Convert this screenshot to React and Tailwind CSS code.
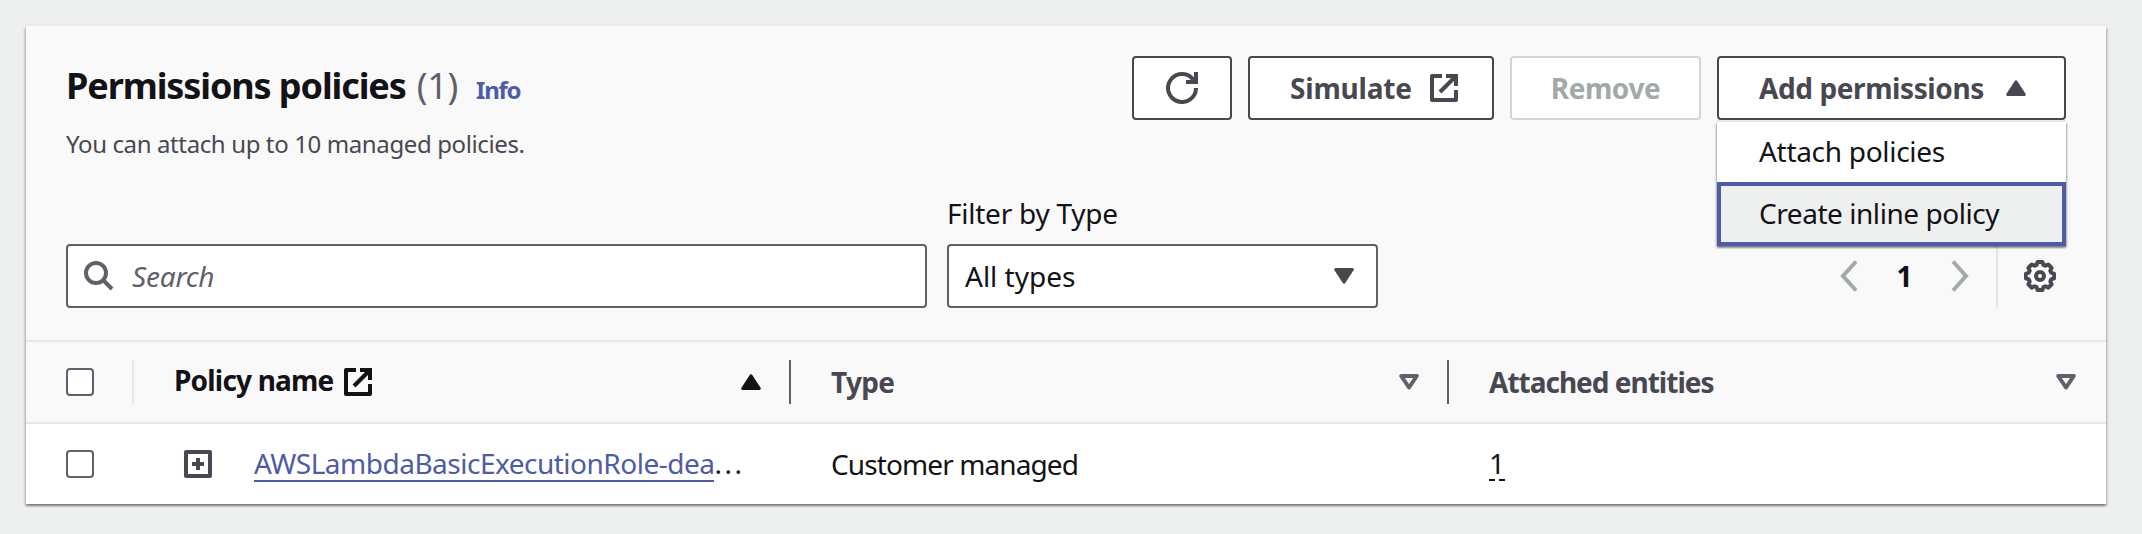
import React from "react";

const External = ({ className }) => (
  <svg viewBox="0 0 28 28" className={className} fill="none" stroke="currentColor" strokeWidth="4">
    <path d="M12 2H2v24h24V16" strokeLinejoin="round" />
    <path d="M16 2h10v10" />
    <path d="M10 18L25 3" />
  </svg>
);

const Refresh = () => (
  <svg viewBox="0 0 32 32" className="size-8" fill="none" stroke="currentColor" strokeWidth="4">
    <path d="M30 16A14 14 0 1 1 27.5 8" />
    <path d="M20 10h10V0" />
  </svg>
);

const SearchIcon = () => (
  <svg viewBox="0 0 30 30" className="size-[30px] shrink-0 text-[#5f6069]" fill="none" stroke="currentColor" strokeWidth="4">
    <circle cx="12" cy="12" r="10" />
    <path d="M19 19l9 9" />
  </svg>
);

const TriUp = ({ className }) => (
  <svg viewBox="0 0 20 16" className={className} fill="currentColor" stroke="currentColor" strokeWidth="3" strokeLinejoin="round">
    <path d="M10 1.8L18.3 14.5H1.7z" />
  </svg>
);

const TriDown = () => (
  <svg viewBox="0 0 20 16" className="h-4 w-5 text-[#484851]" fill="currentColor" stroke="currentColor" strokeWidth="3" strokeLinejoin="round">
    <path d="M10 14.2L18.3 1.5H1.7z" />
  </svg>
);

const TriOutline = () => (
  <svg viewBox="0 0 20 16" className="h-4 w-5 shrink-0 text-[#5f6069]" fill="none" stroke="currentColor" strokeWidth="4" strokeLinejoin="round">
    <path d="M10 13.5L17.8 2H2.2z" />
  </svg>
);

const Chevron = ({ d }) => (
  <svg viewBox="0 0 18 32" className="h-8 w-[18px] text-[#a2a9a9]" fill="none" stroke="currentColor" strokeWidth="4">
    <path d={d} />
  </svg>
);

const Gear = () => (
  <svg viewBox="0 0 32 32" className="size-8 text-[#484851]" fill="none" stroke="currentColor" strokeWidth="4" strokeLinejoin="round">
    <path d="M13.6 2h4.8l1 2.9 2.1.9L24.3 4.5l3.3 3.3-1.3 2.8.9 2 2.8 1v4.8l-2.8 1-.9 2.1 1.3 2.8-3.3 3.3-2.8-1.3-2.1.9-1 2.8h-4.8l-1-2.8-2.1-.9-2.800 1.300-3.300-3.300 1.300-2.800-.9-2.100L2 18.400v-4.800l2.800-1 .9-2-1.300-2.800 3.300-3.300 2.800 1.300 2.100-.9z" />
    <circle cx="16" cy="16" r="4" />
  </svg>
);

const Checkbox = () => <span className="block size-7 rounded border-2 border-[#5f6069] bg-white" />;

export default function App() {
  return (
    <div className="h-[534px] w-[2142px] bg-[#eef0f0] pt-[26px] pl-[26px] font-['Noto_Sans',sans-serif] text-[28px] leading-8 font-[450] whitespace-nowrap text-[#121217]">
      <section className="flex h-[478px] w-[2080px] flex-col bg-[#f9f9f9] shadow-[0_2px_2px_rgba(0,7,22,0.35),2px_2px_2px_rgba(0,7,22,0.12),-2px_2px_2px_rgba(0,7,22,0.12),0_-2px_0_#e9ebeb]">
        <header className="flex h-[154px] justify-between pt-[30px] pr-10 pl-10">
          <div>
            <div className="flex h-[58px] items-baseline pt-px">
              <h2 className="text-[36px] leading-[58px] font-bold tracking-[-1.1px]">Permissions policies</h2>
              <span className="ml-[11px] text-[36px] tracking-[-0.3px] text-[#5f6069]">(1)</span>
              <a className="ml-[18px] text-2xl font-bold tracking-[-1.2px] text-[#4f5ba6]">Info</a>
            </div>
            <p className="mt-[14px] text-2xl tracking-[-0.38px] text-[#484851]">You can attach up to 10 managed policies.</p>
          </div>
          <div className="flex h-16 gap-4 font-bold text-[#484851]">
            <button className="flex w-[100px] items-center justify-center rounded border-2 border-[#484851] bg-white">
              <Refresh />
            </button>
            <button className="flex w-[246px] items-center justify-between rounded border-2 border-[#484851] bg-white pr-[34px] pl-10">
              <span className="tracking-[-0.2px]">Simulate</span>
              <External className="size-7" />
            </button>
            <button className="w-[191px] rounded border-2 border-[#d1d5d5] bg-white tracking-[-0.4px] text-[#a2a9a9]">Remove</button>
            <div className="relative w-[349px]">
              <button className="flex h-16 w-full items-center justify-between rounded border-2 border-[#484851] bg-white pr-[38px] pl-10">
                <span className="tracking-[-0.4px]">Add permissions</span>
                <TriUp className="h-4 w-5" />
              </button>
              <div className="absolute top-[66px] left-0 z-10 w-full bg-white font-[450] text-[#121217] shadow-[0_2px_2px_rgba(0,7,22,0.35),1px_1px_2px_rgba(0,7,22,0.2),-1px_1px_2px_rgba(0,7,22,0.2),0_-2px_0_#ebe9f0]">
                <div className="flex h-[60px] items-center pb-0.5 pl-[42px] tracking-[-0.3px]">Attach policies</div>
                <div className="flex h-16 items-center border-4 border-[#4f5ba6] bg-[#eef0f0] pb-0.5 pl-[38px] tracking-[-0.45px]">Create inline policy</div>
              </div>
            </div>
          </div>
        </header>

        <div className="flex h-[160px] items-end pr-[50px] pb-[32px] pl-10">
          <div className="flex h-16 w-[861px] items-center rounded border-2 border-[#5f6069] bg-white pl-4">
            <SearchIcon />
            <span className="ml-[18px] tracking-[-0.2px] text-[#5f6069] italic">Search</span>
          </div>
          <div className="ml-5 w-[431px]">
            <div className="mb-[15px] tracking-[-0.25px]">Filter by Type</div>
            <div className="flex h-16 items-center justify-between rounded border-2 border-[#5f6069] bg-white pr-[22px] pl-4">
              <span>All types</span>
              <TriDown />
            </div>
          </div>
          <div className="ml-auto flex h-16 items-center">
            <Chevron d="M16 1.5L3 16l13 14.5" />
            <span className="w-[93px] text-center font-bold">1</span>
            <Chevron d="M2 1.5L15 16 2 30.5" />
            <span className="mr-[26px] ml-[27px] h-full w-0.5 bg-[#e5e7e7]" />
            <Gear />
          </div>
        </div>

        <div className="flex h-[84px] items-center border-y-2 border-[#e7e9e9] pl-10 font-bold text-[#484851]">
          <div className="flex h-11 w-[68px] items-center border-r-2 border-[#e7e9e9]"><Checkbox /></div>
          <div className="flex h-11 w-[657px] items-center border-r-2 border-[#5f6069] pr-7 pl-10 text-[#121217]">
            <span className="-mt-1 tracking-[-0.8px]">Policy name</span>
            <External className="ml-[10px] size-7" />
            <TriUp className="ml-auto h-4 w-5" />
          </div>
          <div className="flex h-11 w-[658px] items-center justify-between border-r-2 border-[#5f6069] pr-7 pl-10">
            <span className="tracking-[-0.7px]">Type</span>
            <TriOutline />
          </div>
          <div className="flex h-11 flex-1 items-center justify-between pr-[30px] pl-10">
            <span className="tracking-[-1px]">Attached entities</span>
            <TriOutline />
          </div>
        </div>

        <div className="flex h-20 items-center bg-white pl-10">
          <div className="w-[118px]"><Checkbox /></div>
          <svg viewBox="0 0 28 28" className="size-7 text-[#484851]" fill="none" stroke="currentColor" strokeWidth="4">
            <rect x="2" y="2" width="24" height="24" strokeLinejoin="round" />
            <path d="M8 14h12M14 8v12" />
          </svg>
          <div className="ml-[42px] flex w-[577px]">
            <a className="border-b-2 border-[#4f5ba6] pb-px tracking-[-0.5px] text-[#4f5ba6]">AWSLambdaBasicExecutionRole-dea</a>
            <span className="tracking-[2.500px]">...</span>
          </div>
          <div className="w-[658px] tracking-[-0.9px]">Customer managed</div>
          <div className="border-b-2 border-dashed border-[#121217]">1</div>
        </div>
      </section>
    </div>
  );
}
